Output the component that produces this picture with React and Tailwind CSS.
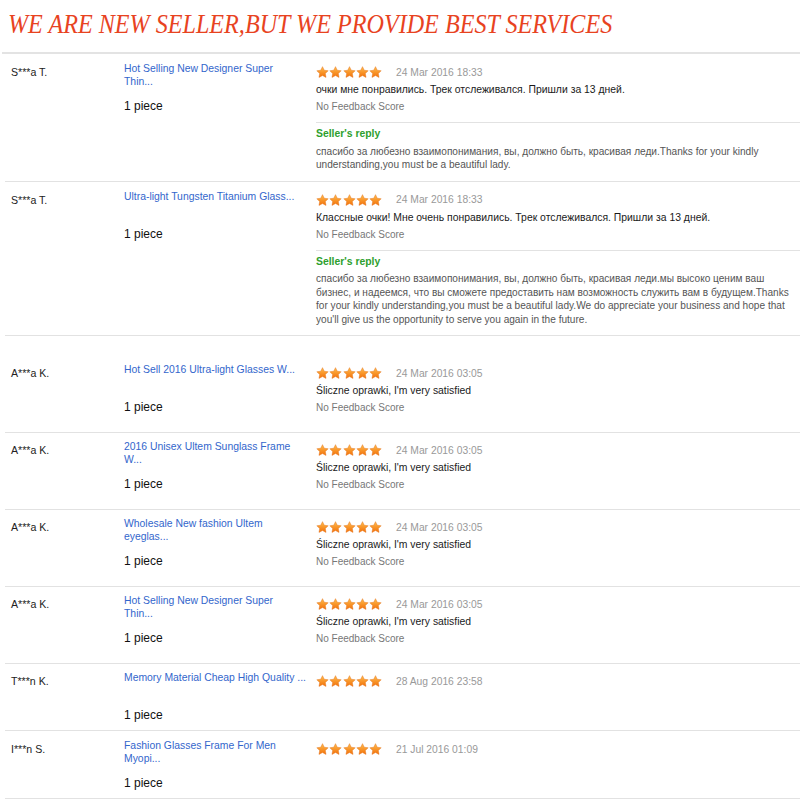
import React from 'react';

const rows = [
  {
    name: 'S***a T.',
    title: ['Hot Selling New Designer Super', 'Thin...'],
    date: '24 Mar 2016 18:33',
    text: 'очки мне понравились. Трек отслеживался. Пришли за 13 дней.',
    reply: [
      'спасибо за любезно взаимопонимания, вы, должно быть, красивая леди.Thanks for your kindly',
      'understanding,you must be a beautiful lady.',
    ],
    pad: 'pt-[8px] pb-[9px]',
  },
  {
    name: 'S***a T.',
    title: ['Ultra-light Tungsten Titanium Glass...'],
    date: '24 Mar 2016 18:33',
    text: 'Классные очки! Мне очень понравились. Трек отслеживался. Пришли за 13 дней.',
    reply: [
      'спасибо за любезно взаимопонимания, вы, должно быть, красивая леди.мы высоко ценим ваш',
      'бизнес, и надеемся, что вы сможете предоставить нам возможность служить вам в будущем.Thanks',
      'for your kindly understanding,you must be a beautiful lady.We do appreciate your business and hope that',
      "you'll give us the opportunity to serve you again in the future.",
    ],
    pad: 'pt-[8px] pb-[9px]',
  },
  {
    name: 'A***a K.',
    title: ['Hot Sell 2016 Ultra-light Glasses W...'],
    date: '24 Mar 2016 03:05',
    text: 'Śliczne oprawki, I\'m very satisfied',
    pad: 'pt-[27px] pb-[16px]',
  },
  {
    name: 'A***a K.',
    title: ['2016 Unisex Ultem Sunglass Frame', 'W...'],
    date: '24 Mar 2016 03:05',
    text: 'Śliczne oprawki, I\'m very satisfied',
    pad: 'pt-[7px] pb-[16px]',
  },
  {
    name: 'A***a K.',
    title: ['Wholesale New fashion Ultem', 'eyeglas...'],
    date: '24 Mar 2016 03:05',
    text: 'Śliczne oprawki, I\'m very satisfied',
    pad: 'pt-[7px] pb-[16px]',
  },
  {
    name: 'A***a K.',
    title: ['Hot Selling New Designer Super', 'Thin...'],
    date: '24 Mar 2016 03:05',
    text: 'Śliczne oprawki, I\'m very satisfied',
    pad: 'pt-[7px] pb-[16px]',
  },
  {
    name: 'T***n K.',
    title: ['Memory Material Cheap High Quality ...'],
    date: '28 Aug 2016 23:58',
    pad: 'pt-[7px] pb-[6px]',
  },
  {
    name: 'I***n S.',
    title: ['Fashion Glasses Frame For Men', 'Myopi...'],
    date: '21 Jul 2016 01:09',
    pad: 'pt-[8px] pb-[6px]',
  },
];

const Star = ({ id }) => (
  <svg width="13" height="13" viewBox="0 0 24 24" className="shrink-0">
    <defs>
      <linearGradient id={id} x1="0" y1="0" x2="0" y2="1">
        <stop offset="0" stopColor="#ffbe4d" />
        <stop offset="1" stopColor="#f2700a" />
      </linearGradient>
    </defs>
    <path
      d="M12 1.2l3.2 6.6 7.3 1-5.3 5.1 1.3 7.2L12 17.7l-6.5 3.4 1.3-7.2L1.5 8.8l7.3-1z"
      fill={`url(#${id})`}
      stroke="#e46f12"
      strokeWidth="0.8"
      strokeLinejoin="round"
    />
  </svg>
);

const Stars = ({ rowIndex }) => (
  <div className="flex gap-[0.25px]">
    {[0, 1, 2, 3, 4].map((i) => (
      <Star key={i} id={`star-${rowIndex}-${i}`} />
    ))}
  </div>
);

export default function App() {
  return (
    <div className="w-[800px] h-[800px] bg-white overflow-hidden font-['Liberation_Sans',Arial,sans-serif]">
      {/* Banner */}
      <div className="h-[54px] ml-[2px] border-b-2 border-[#e3e3e3] pt-[11px] pl-[6px]">
        <h1 className="font-['Liberation_Serif','Times_New_Roman',serif] italic text-[27px] leading-[27px] text-[#e8431f] whitespace-nowrap origin-left scale-x-[0.894]">
          WE ARE NEW SELLER,BUT WE PROVIDE BEST SERVICES
        </h1>
      </div>

      {/* Feedback rows */}
      {rows.map((row, idx) => (
        <div key={idx} className={`ml-[5px] flex border-b border-[#e2e2e2] ${row.pad}`}>
          <div className="w-[119px] shrink-0 pl-[6px] pt-[2px] text-[10.6px] leading-[17px] text-[#222]">
            {row.name}
          </div>

          <div className="w-[192px] shrink-0">
            <div className="h-[26px] text-[10.4px] leading-[13px] text-[#3366cc] whitespace-nowrap">
              {row.title.map((line, i) => (
                <div key={i}>{line}</div>
              ))}
            </div>
            <div className="mt-[10px] text-[12px] leading-[17px] text-[#111]">1 piece</div>
          </div>

          <div className="flex-1 pt-[2px]">
            <div className="flex items-center h-[17px]">
              <Stars rowIndex={idx} />
              <span className="ml-[14px] text-[10.3px] text-[#999]">{row.date}</span>
            </div>
            {row.text && (
              <>
                <div className="text-[10.4px] leading-[17px] text-[#1a1a1a] whitespace-nowrap">{row.text}</div>
                <div className="text-[10px] leading-[17px] text-[#777]">No Feedback Score</div>
              </>
            )}
            {row.reply && (
              <div className="mt-[7px] border-t border-[#e2e2e2] pt-[2px]">
                <div className="text-[10.4px] leading-[17px] font-bold text-[#2ea02e]">Seller's reply</div>
                <div className="mt-[2.5px] text-[10.1px] leading-[13.5px] text-[#555]">
                  {row.reply.map((line, i) => (
                    <div key={i} className="whitespace-nowrap">{line}</div>
                  ))}
                </div>
              </div>
            )}
          </div>
        </div>
      ))}
    </div>
  );
}
